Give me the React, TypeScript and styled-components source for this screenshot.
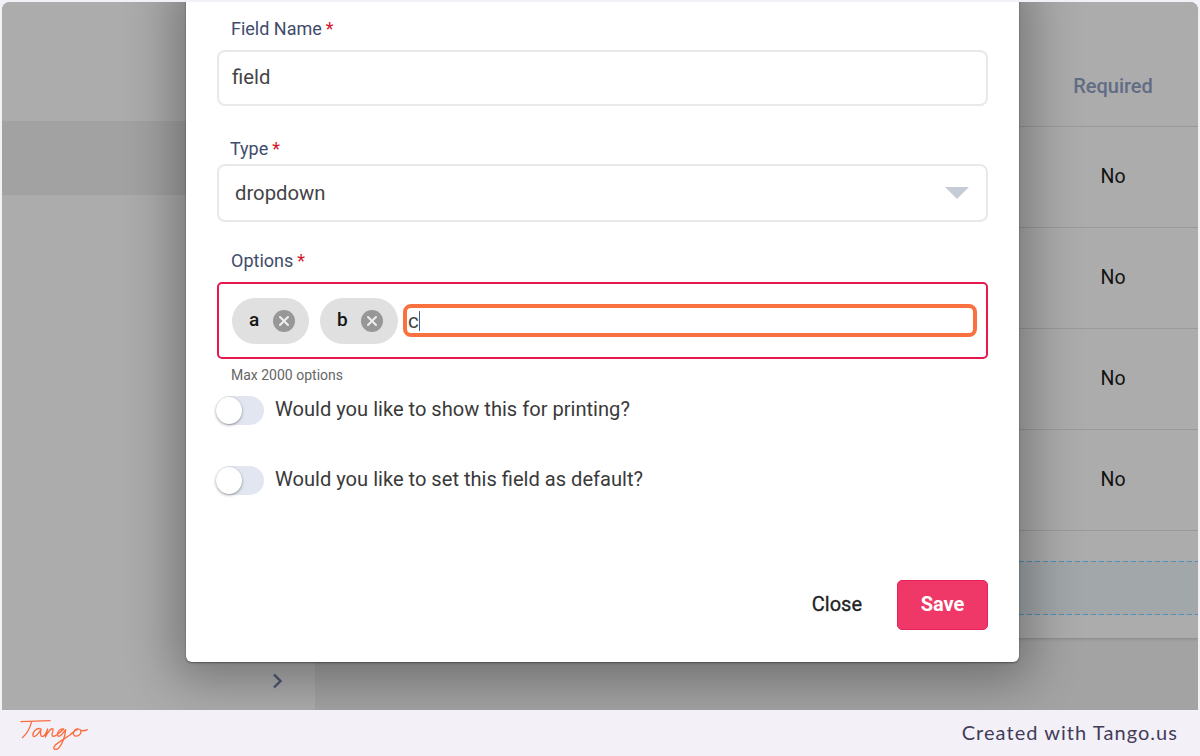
import React from "react";
import styled, { createGlobalStyle } from "styled-components";

const Global = createGlobalStyle`
  html, body { margin: 0; padding: 0; background: #f3f1f7; }
  body { font-family: Roboto, "Liberation Sans", sans-serif; }
  #root { width: 1200px; height: 756px; }
  * { box-sizing: border-box; }
`;

const Page = styled.div`
  width: 1200px; height: 756px; display: flex; flex-direction: column;
  background: #f3f1f7; overflow: hidden; border-radius: 10px;
`;
const Stage = styled.div`
  position: relative; flex: 1; min-height: 0; margin: 2px 2px 0; display: flex;
  background: #a3a3a4; overflow: hidden; border-radius: 8px 8px 0 0;
`;
const Sidebar = styled.aside`
  width: 313px; flex: none; background: #acacac; padding-top: 119px;
  display: flex; flex-direction: column;
`;
const SideRowActive = styled.div`height: 74px; background: #a2a2a2;`;
const Collapse = styled.div`
  margin-top: auto; height: 59px; display: flex; justify-content: flex-end;
  align-items: flex-start; padding: 22px 31px 0 0; color: #4d5672;
`;
const Main = styled.main`
  flex: 1; min-width: 0; display: flex; flex-direction: column; padding: 0 0 72px 0;
`;
const Table = styled.div`
  flex: 1; background: #acacac; display: flex; flex-direction: column;
  box-shadow: 0 1px 3px rgba(0,0,0,.18);
`;
const HeaderRow = styled.div`
  height: 125px; padding-top: 72px; border-bottom: 1px solid #9a9a9a;
  display: flex; justify-content: flex-end;
`;
const Cell = styled.div`
  width: 170px; text-align: center; font-size: 19.5px; line-height: 24px; color: #111;
`;
const HeadCell = styled(Cell)`font-weight: 500; font-size: 20px; color: #626d85;`;
const Row = styled.div`
  height: 101px; padding-top: 38px; border-bottom: 1px solid #9a9a9a;
  display: flex; justify-content: flex-end;
`;
const DashedRow = styled.div`
  height: 54px; margin-top: 30px; background-color: #a2a7aa;
  background-image:
    repeating-linear-gradient(90deg, #4f8db5 0 5px, transparent 5px 8px),
    repeating-linear-gradient(90deg, #4f8db5 0 5px, transparent 5px 8px);
  background-size: 100% 1px, 100% 1px;
  background-position: 0 0, 0 100%;
  background-repeat: no-repeat;
`;

const Modal = styled.section`
  position: absolute; left: 184px; top: -20px; width: 833px; height: 680px;
  background: #fff; border-radius: 6px; padding: 36px 30px 0 31px;
  box-shadow: 0 1px 2px rgba(0,0,0,.4), 0 6px 50px 12px rgba(0,0,0,.32);
  display: flex; flex-direction: column;
`;
const Label = styled.div<{ $indent: number }>`
  font-size: 18px; line-height: 22px; color: #3f4b6b; padding-left: ${p => p.$indent}px;
`;
const Star = styled.span`color: #d3142c; margin-left: 4px;`;
const Input = styled.div<{ $h: number; $pad: number; $mt: number; $pb: number }>`
  height: ${p => p.$h}px; margin-top: ${p => p.$mt}px; padding: 0 0 ${p => p.$pb}px ${p => p.$pad}px; width: 771px;
  border: 2px solid #e8e9eb; border-radius: 8px; display: flex; align-items: center;
  position: relative; font-size: 20.3px; color: #444446; flex: none;
`;
const Arrow = styled.span`
  position: absolute; right: 17px; top: 21px; width: 0; height: 0;
  border-left: 12px solid transparent; border-right: 12px solid transparent;
  border-top: 12px solid #c5ccd6;
`;
const SelectLabel = styled(Label)`margin-top: 32px;`;
const OptionsLabel = styled(Label)`margin-top: 28px;`;
const OptionsBox = styled.div`
  width: 771px; height: 77px; margin-top: 10px; border: 2px solid #e8184d; border-radius: 5px;
  display: flex; align-items: center; padding: 0 9px 0 13px; gap: 11px;
`;
const Chip = styled.div<{ $w: number }>`
  width: ${p => p.$w}px; height: 46px; border-radius: 23px; background: #e0e0e0; display: flex; align-items: center;
  padding-left: 17px; gap: 14px; font-size: 19px; font-weight: 500; color: #151515; flex: none;
`;
const ChipX = styled.span`
  width: 22px; height: 22px; border-radius: 50%; background: #979797; display: flex;
  align-items: center; justify-content: center; flex: none;
`;
const ChipLetter = styled.span`width: 10px; margin-top: -2px;`;
const Typed = styled.div`
  flex: 1; margin-left: -6px; height: 33px; border: 4px solid #f9713f; border-radius: 8px; display: flex;
  align-items: center; padding-left: 1px; font-size: 20.5px; color: #444;
`;
const Caret = styled.span`width: 1px; height: 20px; background: #3b5f9c;`;
const Hint = styled.div`
  font-size: 14px; line-height: 17px; color: #666; margin: 8px 0 0 14px;
`;
const ToggleRow = styled.div<{ $mt: number }>`
  display: flex; align-items: center; gap: 11px; margin: ${p => p.$mt}px 0 0 -1px; height: 30px;
`;
const Track = styled.div`
  width: 48px; height: 29px; background: #e1e6f0; border-radius: 15px; position: relative; flex: none;
`;
const Knob = styled.span`
  position: absolute; left: 0; top: 1px; width: 26px; height: 27px; border-radius: 50%;
  background: #fff; box-shadow: 0 1px 3px rgba(0,0,0,.4);
`;
const ToggleText = styled.div`font-size: 20.1px; color: #3a3a3a; line-height: 24px; margin-top: -3px;`;
const Actions = styled.div`
  margin-top: auto; padding: 0 0 32px; display: flex; justify-content: flex-end; align-items: center; gap: 35px; width: 771px;
`;
const CloseBtn = styled.div`font-size: 20px; color: #222; margin-top: -3px; -webkit-text-stroke: .3px #222;`;
const SaveBtn = styled.div`
  width: 91px; height: 50px; padding-bottom: 3px; background: #ef3867; border: 1px solid #e5215a; border-radius: 5px; color: #fff;
  font-weight: 700; font-size: 20px; display: flex; align-items: center; justify-content: center;
`;

const Footer = styled.footer`
  height: 46px; flex: none; display: flex; align-items: center; justify-content: space-between;
  padding: 0 22px 0 20px;
`;
const LogoMark = styled.svg`
  margin-top: 8px; width: 70px; height: 34px; flex: none;
`;
const Credit = styled.div`
  font-family: Lato, sans-serif; font-size: 20px; letter-spacing: 1.05px; color: #423c5a; margin-top: -2px;
`;

const X = () => (
  <svg width="12" height="12" viewBox="0 0 12 12" aria-hidden="true">
    <path d="M2 2 10 10M10 2 2 10" stroke="#eeeeee" strokeWidth="2" strokeLinecap="round" />
  </svg>
);

const Logo = () => (
  <LogoMark viewBox="15 15 210 102" fill="none" stroke="#fb6d3f" strokeWidth="4" strokeLinecap="round" strokeLinejoin="round" aria-label="Tango logo">
    <path d="M18 20 C45 19 75 18 105 17" />
    <path d="M50 20 C45 38 35 58 22 68" />
    <path d="M78 42 C65 36 52 52 54 62 C56 70 70 58 78 44 C76 52 75 66 84 64 C90 62 95 50 98 42 C96 50 92 58 91 66 C97 54 108 38 114 42 C117 46 106 62 114 64 C122 65 132 55 146 42 C134 40 124 54 128 62 C132 68 144 56 152 44 C150 62 143 85 132 98 C124 106 112 104 118 94 C124 84 148 72 165 60 C172 54 178 46 190 42 C178 40 170 58 180 63 C192 66 204 52 194 43 C200 50 208 48 217 44" />
  </LogoMark>
);

const rows = ["No", "No", "No", "No"];

export default function App() {
  return (
    <Page>
      <Global />
      <Stage>
        <Sidebar>
          <SideRowActive />
          <Collapse>
            <svg width="12" height="16" viewBox="0 0 12 16" fill="none" stroke="currentColor" strokeWidth="2.4" aria-hidden="true">
              <path d="M2 1.500 8.500 8 2 14.500" />
            </svg>
          </Collapse>
        </Sidebar>
        <Main>
          <Table>
            <HeaderRow><HeadCell>Required</HeadCell></HeaderRow>
            {rows.map((r, i) => <Row key={i}><Cell>{r}</Cell></Row>)}
            <DashedRow />
          </Table>
        </Main>
        <Modal>
          <Label $indent={14}>Field Name<Star>*</Star></Label>
          <Input $h={56} $pad={13} $mt={10} $pb={3}>field</Input>
          <SelectLabel $indent={13}>Type<Star>*</Star></SelectLabel>
          <Input $h={58} $pad={16} $mt={4} $pb={1}>dropdown<Arrow /></Input>
          <OptionsLabel $indent={14}>Options<Star>*</Star></OptionsLabel>
          <OptionsBox>
            <Chip $w={77}><ChipLetter>a</ChipLetter><ChipX><X /></ChipX></Chip>
            <Chip $w={78}><ChipLetter>b</ChipLetter><ChipX><X /></ChipX></Chip>
            <Typed>c<Caret /></Typed>
          </OptionsBox>
          <Hint>Max 2000 options</Hint>
          <ToggleRow $mt={11}><Track><Knob /></Track><ToggleText>Would you like to show this for printing?</ToggleText></ToggleRow>
          <ToggleRow $mt={40}><Track><Knob /></Track><ToggleText>Would you like to set this field as default?</ToggleText></ToggleRow>
          <Actions>
            <CloseBtn>Close</CloseBtn>
            <SaveBtn>Save</SaveBtn>
          </Actions>
        </Modal>
      </Stage>
      <Footer>
        <Logo />
        <Credit>Created with Tango.us</Credit>
      </Footer>
    </Page>
  );
}
